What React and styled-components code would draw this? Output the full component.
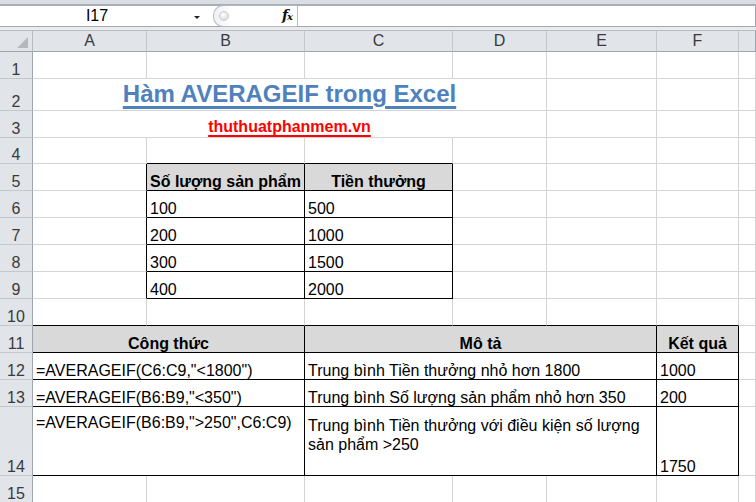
import React from "react";
import styled, { createGlobalStyle } from "styled-components";

const GlobalStyle = createGlobalStyle`
  html, body {
    margin: 0;
    padding: 0;
    background: #ffffff;
    overflow: hidden;
  }
  body {
    font-family: "Liberation Sans", Arial, sans-serif;
  }
`;

const Window = styled.div`
  width: 756px;
  height: 502px;
  overflow: hidden;
  display: flex;
  flex-direction: column;
  background: #ffffff;
`;

const TopStrip = styled.div`
  height: 4px;
  background: #dadee4;
  border-bottom: 2px solid #a9aeb5;
  flex-shrink: 0;
`;

const FormulaBar = styled.div`
  height: 20px;
  display: flex;
  flex-shrink: 0;
  border-bottom: 1px solid #a5a9ae;
  background: #ffffff;
`;

const NameBox = styled.div`
  width: 213px;
  display: flex;
  align-items: center;
`;

const NameText = styled.span`
  width: 194px;
  text-align: center;
  font-size: 16px;
  color: #000;
`;

const DropArrow = styled.span`
  width: 0;
  height: 0;
  border-left: 3px solid transparent;
  border-right: 3px solid transparent;
  border-top: 3px solid #222;
  margin-top: 2px;
`;

const FxPill = styled.div`
  width: 84px;
  box-sizing: border-box;
  border: 1px solid #b4b9bf;
  border-right: none;
  border-radius: 10px 0 0 10px;
  margin-top: -1px;
  margin-bottom: -1px;
  display: flex;
  align-items: center;
  justify-content: space-between;
  padding: 0 5px 0 5px;
  background: linear-gradient(to right, #eef0f2 0px, #ffffff 18px);
`;

const Knob = styled.span`
  width: 8px;
  height: 8px;
  border-radius: 50%;
  background: radial-gradient(circle at 40% 35%, #ffffff, #cfd3d8);
  border: 1px solid #c9cdd2;
`;

const Fx = styled.span`
  font-family: "DejaVu Serif", "Liberation Serif", serif;
  font-style: italic;
  font-weight: 700;
  font-size: 14px;
  line-height: 16px;
  color: #111;
  letter-spacing: -1px;

  small {
    font-size: 10px;
  }
`;

const FormulaInput = styled.div`
  flex: 1;
  border-left: 1px solid #b4b9bf;
  border-right: 1px solid #a0a5ab;
`;

const Gap = styled.div`
  height: 3px;
  background: #e9ebee;
  border-bottom: 1px solid #b9bdc3;
  flex-shrink: 0;
`;

const Sheet = styled.div`
  display: grid;
  grid-template-columns: 33px 114px 158px 148px 94px 110px 82px 1fr;
  grid-template-rows: 21px 27px 32px 27px 26px 27px 27px 27px 27px 27px 27px 27px 27px 27px 69px 27px;
  font-size: 16px;
  color: #000;
`;

const Corner = styled.div`
  grid-row: 1;
  grid-column: 1;
  background: #e1e4e9;
  border-right: 1px solid #b7bcc2;
  border-bottom: 1px solid #9ea5ad;
  position: relative;

  &::after {
    content: "";
    position: absolute;
    right: 4px;
    bottom: 3px;
    width: 0;
    height: 0;
    border-left: 11px solid transparent;
    border-bottom: 11px solid #b4b8be;
  }
`;

const ColHead = styled.div`
  grid-row: 1;
  grid-column: ${(p) => p.$c};
  background: #e1e4e9;
  border-right: 1px solid ${(p) => (p.$last ? "#a0a5ab" : "#c3c8ce")};
  border-bottom: 1px solid #9ea5ad;
  display: flex;
  align-items: center;
  justify-content: center;
  font-size: 16px;
  color: #3a3a3a;
`;

const RowHead = styled.div`
  grid-row: ${(p) => p.$r};
  grid-column: 1;
  background: #e1e4e9;
  border-right: 1px solid #9ea5ad;
  border-bottom: 1px solid #c3c8ce;
  display: flex;
  align-items: flex-end;
  justify-content: center;
  font-size: 16px;
  line-height: 16px;
  color: #3a3a3a;
`;

const Cell = styled.div`
  grid-row: ${(p) => p.$r};
  grid-column: ${(p) => p.$c} / span ${(p) => p.$span};
  border-right: 1px solid ${(p) => (p.$br ? "#000" : "#d4d4d4")};
  border-bottom: 1px solid ${(p) => (p.$bb ? "#000" : "#d4d4d4")};
  background: ${(p) => p.$fill || "transparent"};
  display: flex;
  align-items: ${(p) => (p.$top ? "flex-start" : "flex-end")};
  justify-content: ${(p) => (p.$center ? "center" : "flex-start")};
  padding: ${(p) => p.$pt || 0}px 3px ${(p) => p.$pb || 0}px;
  line-height: 17px;
  white-space: ${(p) => (p.$wrap ? "normal" : "nowrap")};
  font-weight: ${(p) => (p.$bold ? 700 : 400)};
  min-width: 0;
`;

const Title = styled.span`
  font-size: 24px;
  line-height: 24px;
  font-weight: 700;
  color: #4f81bd;
  text-decoration: underline;
  text-decoration-thickness: 3px;
  text-underline-offset: 4px;
`;

const SiteLink = styled.span`
  font-size: 16px;
  font-weight: 700;
  color: #ff0000;
  text-decoration: underline;
  text-decoration-thickness: 2px;
  text-underline-offset: 3px;
`;

const Wrapped = styled.span`
  line-height: 19px;
`;

const COLS = ["A", "B", "C", "D", "E", "F", "G"];

const merges = {
  A2: 4,
  A3: 4,
  A11: 2,
  A12: 2,
  A13: 2,
  A14: 2,
  C11: 3,
  C12: 3,
  C13: 3,
  C14: 3,
};

const tables = [
  { top: 5, bottom: 9, left: 2, right: 3 },
  { top: 11, bottom: 14, left: 1, right: 6 },
];

const GRAY = "#d9d9d9";

const content = {
  A2: { node: <Title>Hàm AVERAGEIF trong Excel</Title>, center: true, pb: 4 },
  A3: { node: <SiteLink>thuthuatphanmem.vn</SiteLink>, center: true, pb: 2 },
  B5: { node: "Số lượng sản phẩm", bold: true, center: true, fill: GRAY },
  C5: { node: "Tiền thưởng", bold: true, center: true, fill: GRAY },
  B6: { node: "100" },
  B7: { node: "200" },
  B8: { node: "300" },
  B9: { node: "400" },
  C6: { node: "500" },
  C7: { node: "1000" },
  C8: { node: "1500" },
  C9: { node: "2000" },
  A11: { node: "Công thức", bold: true, center: true, fill: GRAY },
  C11: { node: "Mô tả", bold: true, center: true, fill: GRAY },
  F11: { node: "Kết quả", bold: true, center: true, fill: GRAY },
  A12: { node: '=AVERAGEIF(C6:C9,"<1800")' },
  C12: { node: "Trung bình Tiền thưởng nhỏ hơn 1800" },
  F12: { node: "1000" },
  A13: { node: '=AVERAGEIF(B6:B9,"<350")' },
  C13: { node: "Trung bình Số lượng sản phẩm nhỏ hơn 350" },
  F13: { node: "200" },
  A14: { node: '=AVERAGEIF(B6:B9,">250",C6:C9)', top: true, pt: 7 },
  C14: {
    node: <Wrapped>Trung bình Tiền thưởng với điều kiện số lượng sản phẩm &gt;250</Wrapped>,
    top: true,
    wrap: true,
    pt: 9,
  },
  F14: { node: "1750" },
};

const inTable = (r, c) =>
  tables.some((t) => r >= t.top && r <= t.bottom && c >= t.left && c <= t.right);

function buildCells() {
  const covered = new Set();
  Object.keys(merges).forEach((key) => {
    const c = COLS.indexOf(key[0]) + 1;
    const r = Number(key.slice(1));
    for (let i = 1; i < merges[key]; i++) covered.add(`${COLS[c - 1 + i]}${r}`);
  });

  const cells = [];
  for (let r = 1; r <= 15; r++) {
    for (let c = 1; c <= 7; c++) {
      const key = `${COLS[c - 1]}${r}`;
      if (covered.has(key)) continue;
      const span = merges[key] || 1;
      const last = c + span - 1;
      const bb = inTable(r, c) || inTable(r + 1, c);
      const br = inTable(r, last) || inTable(r, last + 1);
      const info = content[key] || {};
      cells.push(
        <Cell
          key={key}
          $r={r + 1}
          $c={c + 1}
          $span={span}
          $bb={bb}
          $br={br}
          $fill={info.fill}
          $bold={info.bold}
          $center={info.center}
          $top={info.top}
          $wrap={info.wrap}
          $pt={info.pt}
          $pb={info.pb}
        >
          {info.node}
        </Cell>
      );
    }
  }
  return cells;
}

export default function App() {
  return (
    <>
      <GlobalStyle />
      <Window>
        <TopStrip />
        <FormulaBar>
          <NameBox>
            <NameText>I17</NameText>
            <DropArrow />
          </NameBox>
          <FxPill>
            <Knob />
            <Fx>
              f<small>x</small>
            </Fx>
          </FxPill>
          <FormulaInput />
        </FormulaBar>
        <Gap />
        <Sheet>
          <Corner />
          {COLS.map((name, i) => (
            <ColHead key={name} $c={i + 2} $last={i === COLS.length - 1}>
              {name === "G" ? "" : name}
            </ColHead>
          ))}
          {Array.from({ length: 15 }, (_, i) => (
            <RowHead key={i} $r={i + 2}>
              {i + 1}
            </RowHead>
          ))}
          {buildCells()}
        </Sheet>
      </Window>
    </>
  );
}
